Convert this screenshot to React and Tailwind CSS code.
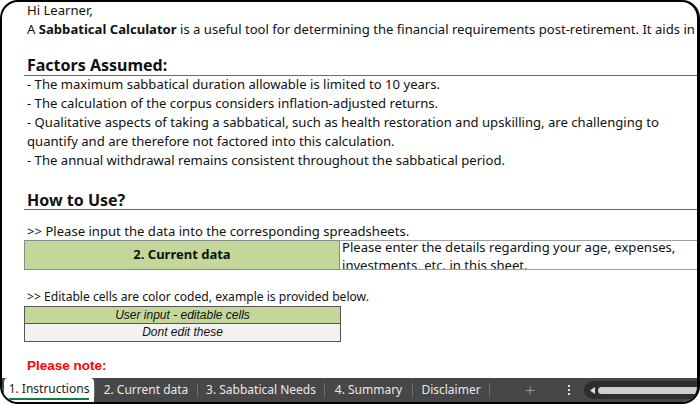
import React from 'react';

const factors = [
  '- The maximum sabbatical duration allowable is limited to 10 years.',
  '- The calculation of the corpus considers inflation-adjusted returns.',
  '- Qualitative aspects of taking a sabbatical, such as health restoration and upskilling, are challenging to',
  'quantify and are therefore not factored into this calculation.',
  '- The annual withdrawal remains consistent throughout the sabbatical period.',
];

const tabs = [
  { label: '2. Current data', w: 'w-[102px]' },
  { label: '3. Sabbatical Needs', w: 'w-[126px]' },
  { label: '4. Summary', w: 'w-[87px]' },
  { label: 'Disclaimer', w: 'w-[76px]' },
];

export default function App() {
  return (
    <div className="w-[700px] h-[404px] bg-white overflow-hidden">
      <div className="w-full h-full border-2 border-r-[3px] border-black rounded-[18px] overflow-hidden flex flex-col bg-white">
        <div className="flex-1 overflow-hidden text-[13.1px] text-[#111] font-['Noto_Sans',sans-serif]">
          <div className="h-[18px] leading-[17px] pl-[25px] whitespace-nowrap">Hi Learner,</div>
          <div className="h-[19px] leading-[19px] pl-[25px] whitespace-nowrap">
            A <b>Sabbatical Calculator</b> is a useful tool for determining the financial requirements post-retirement. It aids in
          </div>
          <div className="h-[16px]" />
          <div className="h-[21px] leading-[20px] ml-[22px] pl-[3px] border-b border-[#6b6b6b] font-bold text-[16px]">
            Factors Assumed:
          </div>
          {factors.map((f) => (
            <div key={f} className="h-[19px] leading-[16px] pl-[25px] whitespace-nowrap">{f}</div>
          ))}
          <div className="h-[19px]" />
          <div className="h-[20px] leading-[20px] ml-[22px] pl-[3px] border-b border-[#6b6b6b] font-bold text-[16px]">
            How to Use?
          </div>
          <div className="h-[11px]" />
          <div className="h-[19px] leading-[20px] pl-[25px] whitespace-nowrap">
            &gt;&gt; Please input the data into the corresponding spreadsheets.
          </div>
          <div className="ml-[22px] flex h-[30px]">
            <div className="w-[316px] shrink-0 bg-[#c4d79b] border border-[#8c8c8c] flex items-center justify-center font-bold text-[13px]">
              2. Current data
            </div>
            <div className="flex-1 border-y border-[#a0a0a0] pl-[2px] overflow-hidden">
              <div className="-mt-[3px] leading-[18px] whitespace-nowrap">
                Please enter the details regarding your age, expenses,<br />investments, etc. in this sheet.
              </div>
            </div>
          </div>
          <div className="h-[18px]" />
          <div className="h-[18px] leading-[18px] pl-[25px] whitespace-nowrap text-[12.1px]">
            &gt;&gt; Editable cells are color coded, example is provided below.
          </div>
          <div className="ml-[22px] w-[317px] border border-[#555] font-['Liberation_Sans',Arial,sans-serif] italic text-[12px] text-[#111]">
            <div className="h-[17px] leading-[17px] text-center bg-[#c4d79b] border-b border-[#555]">User input - editable cells</div>
            <div className="h-[17px] leading-[17px] text-center bg-[#f2f2f2]">Dont edit these</div>
          </div>
          <div className="h-[14px]" />
          <div className="h-[19px] leading-[19px] pl-[25px] font-['Liberation_Sans',Arial,sans-serif] font-bold text-[13.5px] text-[#ff0000]">
            Please note:
          </div>
        </div>
        <div className="h-[24px] shrink-0 bg-[#474747] flex items-stretch font-['Noto_Sans',sans-serif] text-[12px] text-[#e8e8e8]">
          <div className="ml-[2px] w-[90px] bg-white rounded-t-[4px] flex flex-col items-center justify-center text-[#222]">
            <span className="leading-[16px] border-b-2 border-[#107c41] pb-[1px]">1. Instructions</span>
          </div>
          {tabs.map((t) => (
            <div key={t.label} className="flex items-center">
              <div className="w-px h-[14px] bg-[#6e6e6e]" />
              <div className={`${t.w} text-center whitespace-nowrap`}>{t.label}</div>
            </div>
          ))}
          <div className="w-px h-[14px] bg-[#6e6e6e] self-center" />
          <div className="w-[74px] flex items-center pl-[35px] text-[#9a9a9a] text-[18px] font-light">+</div>
          <div className="w-[10px] flex flex-col items-center justify-center gap-[2px]">
            <div className="w-[2px] h-[2px] bg-[#e0e0e0]" />
            <div className="w-[2px] h-[2px] bg-[#e0e0e0]" />
            <div className="w-[2px] h-[2px] bg-[#e0e0e0]" />
          </div>
          <div className="flex-1 ml-[10px] my-[3px] rounded-l-full bg-[#2e2e2e] flex items-center pl-[6px]">
            <svg width="5" height="7" viewBox="0 0 5 7"><path d="M5 0 L0 3.5 L5 7 Z" fill="#e0e0e0" /></svg>
            <div className="flex-1 ml-[3px] h-[7px] rounded-l-full bg-[#cfcfcf]" />
          </div>
        </div>
      </div>
    </div>
  );
}
